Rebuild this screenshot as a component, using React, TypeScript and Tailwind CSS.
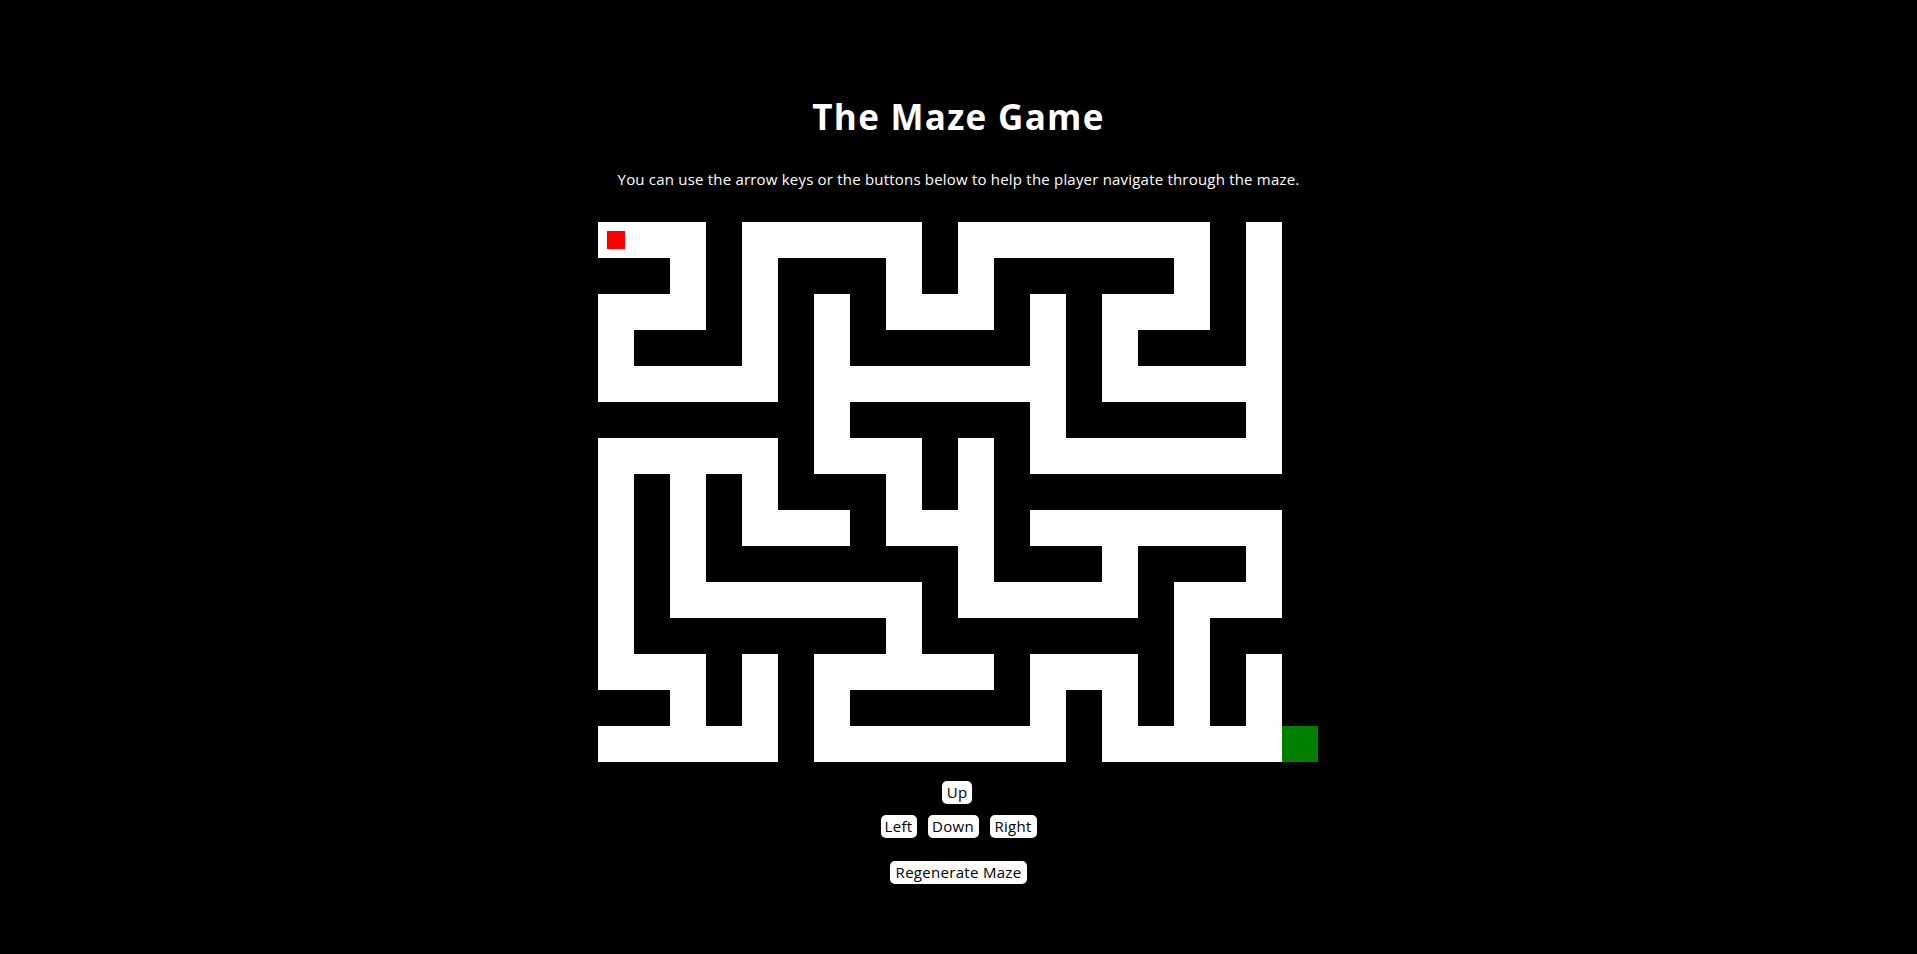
import React from "react";

const MAZE = [
  "...#.....#.......#.#",
  "##.#.###.#.#####.#.#",
  "...#.#.#...#.#...#.#",
  ".###.#.#####.#.###.#",
  ".....#.......#.....#",
  "######.#####.#####.#",
  ".....#...#.#.......#",
  ".#.#.###.#.#########",
  ".#.#...#...#.......#",
  ".#.#######.###.###.#",
  ".#.......#.....#...#",
  ".#######.#######.###",
  "...#.#.....#...#.#.#",
  "##.#.#.#####.#.#.#.#",
  ".....#.......#.....E",
];

const font = { fontFamily: '"Open Sans", "Noto Sans", sans-serif' };

function Btn({ label, w }: { label: string; w: string }) {
  return (
    <button
      className={`h-[23px] ${w} rounded-[5px] bg-white text-black text-[15px] leading-[23px] tracking-[0.3px] flex items-center justify-center`}
    >
      {label}
    </button>
  );
}

export default function App() {
  return (
    <div
      className="min-h-screen w-full bg-black text-white flex flex-col items-center"
      style={font}
    >
      <h1 className="mt-[97px] h-[40px] text-[35px] leading-[40px] font-bold tracking-[1.3px]">
        The Maze Game
      </h1>
      <p className="mt-[32px] h-[20px] text-[15px] leading-[20px] tracking-[0.2px]">
        You can use the arrow keys or the buttons below to help the player navigate through the maze.
      </p>
      <div className="mt-[33px] mr-[1px] grid grid-cols-[repeat(20,36px)] grid-rows-[repeat(15,36px)]">
        {MAZE.flatMap((row, r) =>
          row.split("").map((ch, c) => {
            if (ch === "E") return <div key={`${r}-${c}`} className="bg-[#008000]" />;
            if (ch === "#") return <div key={`${r}-${c}`} className="bg-black" />;
            return (
              <div key={`${r}-${c}`} className="bg-white flex items-center justify-center">
                {r === 0 && c === 0 ? <div className="w-[18px] h-[18px] bg-[#ff0000]" /> : null}
              </div>
            );
          })
        )}
      </div>
      <div className="mt-[19px] flex flex-col items-center gap-[11px]">
        <div className="mr-[3px]">
          <Btn label="Up" w="w-[30px]" />
        </div>
        <div className="flex gap-[11px]">
          <Btn label="Left" w="w-[36px]" />
          <Btn label="Down" w="w-[51px]" />
          <Btn label="Right" w="w-[47px]" />
        </div>
      </div>
      <div className="mt-[23px]">
        <Btn label="Regenerate Maze" w="w-[137px]" />
      </div>
    </div>
  );
}
